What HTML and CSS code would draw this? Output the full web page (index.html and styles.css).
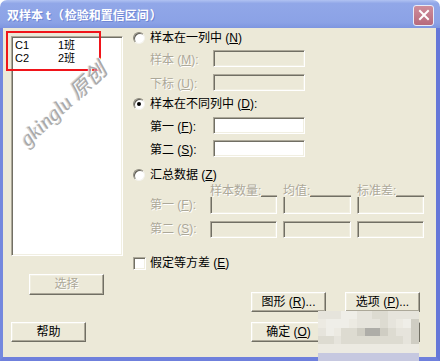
FILE: index.html
```html
<!DOCTYPE html>
<html>
<head>
  <meta charset="utf-8">
  <title>双样本 t</title>
  <link rel="stylesheet" href="styles.css">
</head>
<body>
<div class="window">
  <div class="titlebar">
    <span class="title">双样本 t<span class="paren">（</span>检验和置信区间<span class="paren">）</span></span>
    <span class="close">
      <svg width="12" height="12" viewBox="0 0 12 12"><path d="M2 2 L10 10 M10 2 L2 10" stroke="#fff" stroke-width="2" stroke-linecap="square"/></svg>
    </span>
  </div>
  <div class="frame">
    <div class="left">
      <div class="listbox">
        <div class="list-row"><span class="col">C1</span><span>1班</span></div>
        <div class="list-row"><span class="col">C2</span><span>2班</span></div>
      </div>
      <button class="btn btn-select" disabled>选择</button>
      <button class="btn btn-help">帮助</button>
    </div>

    <div class="right">
      <div class="option first"><span class="radio"></span><span>样本在一列中 (<u>N</u>)</span></div>
      <div class="field gap4 off"><span class="lbl">样本 (<u>M</u>):</span><span class="box"></span></div>
      <div class="field gap7 off"><span class="lbl">下标 (<u>U</u>):</span><span class="box"></span></div>

      <div class="option gap5"><span class="radio on"></span><span>样本在不同列中 (<u>D</u>):</span></div>
      <div class="field gap5"><span class="lbl">第一 (<u>F</u>):</span><span class="box white"></span></div>
      <div class="field gap6"><span class="lbl">第二 (<u>S</u>):</span><span class="box white"></span></div>

      <div class="option gap10"><span class="radio"></span><span>汇总数据 (<u>Z</u>)</span></div>
      <div class="summary off">
        <span></span>
        <div class="head"><span>样本数量:</span><i class="rule"></i></div>
        <div class="head"><span>均值:</span><i class="rule"></i></div>
        <div class="head"><span>标准差:</span><i class="rule"></i></div>
        <span class="lbl">第一 (<u>F</u>):</span>
        <span class="box open"></span>
        <span class="box open"></span>
        <span class="box open"></span>
        <span class="lbl row2">第二 (<u>S</u>):</span>
        <span class="box row2"></span>
        <span class="box row2"></span>
        <span class="box row2"></span>
      </div>

      <div class="option check-row"><span class="check"></span><span>假定等方差 (<u>E</u>)</span></div>

      <div class="buttons gap21">
        <button class="btn">图形 (<u>R</u>)...</button>
        <button class="btn">选项 (<u>P</u>)...</button>
      </div>
      <div class="buttons gap10">
        <button class="btn">确定 (<u>O</u>)</button>
        <button class="btn">取消</button>
      </div>
    </div>
  </div>

  <!-- overlays on the screenshot -->
  <div class="redbox"></div>
  <div class="watermark">gkinglu 原创</div>
  <div class="mosaic">
    <i class="m1"></i><i class="m1"></i><i class="m1"></i><i class="m2"></i><i class="m2"></i><i class="m1"></i><i class="m1"></i><i class="m3"></i><i class="m3"></i><i class="m1"></i><i class="m1"></i><i class="m1"></i><i class="m1"></i>
    <i class="m6"></i><i class="m2"></i><i class="m2"></i><i class="m2"></i><i class="m6"></i><i class="m1"></i><i class="m1"></i><i class="m1"></i><i class="m3"></i><i class="m1"></i><i class="m6"></i><i class="m2"></i><i class="m4"></i>
    <i class="m1"></i><i class="m2"></i><i class="m6"></i><i class="m3"></i><i class="m3"></i><i class="m4"></i><i class="m5"></i><i class="m5"></i><i class="m4"></i><i class="m3"></i><i class="m1"></i><i class="m1"></i><i class="m4"></i>
    <i class="m3"></i><i class="m3"></i><i class="m1"></i><i class="m3"></i><i class="m3"></i><i class="m3"></i><i class="m3"></i><i class="m3"></i><i class="m3"></i><i class="m3"></i><i class="m3"></i><i class="m1"></i><i class="m4"></i>
    <i class="m6"></i><i class="m6"></i><i class="m6"></i><i class="m6"></i><i class="m6"></i><i class="m6"></i><i class="m6"></i><i class="m6"></i><i class="m6"></i><i class="m6"></i><i class="m6"></i><i class="m6"></i><i class="m6"></i>
    <i class="m7"></i><i class="m7"></i><i class="m7"></i><i class="m7"></i><i class="m7"></i><i class="m7"></i><i class="m7"></i><i class="m7"></i><i class="m7"></i><i class="m7"></i><i class="m7"></i><i class="m7"></i><i class="m7"></i>
  </div>
</div>
</body>
</html>
```

FILE: styles.css
```css
body {
  margin: 0;
  background: #fff;
  font-family: "Liberation Sans", "Noto Sans CJK SC", sans-serif;
  font-size: 12px;
  color: #000;
}

u {
  text-decoration: underline;
}

.window {
  position: relative;
  width: 440px;
  height: 361px;
  display: flex;
  flex-direction: column;
}

/* title bar */
.titlebar {
  height: 28px;
  flex: none;
  display: flex;
  align-items: center;
  justify-content: space-between;
  padding: 0 6px 0 7px;
  border-radius: 7px 7px 0 0;
  background: linear-gradient(#b0c2f2 0, #91a7e8 12%, #8ba2e6 80%, #7e96e0 100%);
  box-sizing: border-box;
}
.title {
  font-family: "Noto Sans CJK SC", "DejaVu Sans", sans-serif;
  color: #fff;
  font-weight: bold;
  font-size: 12px;
  white-space: nowrap;
  text-shadow: 1px 1px 0 #6f86d4;
  padding-top: 1px;
}
.paren {
  display: inline-block;
  width: 12px;
  margin: 0 1px;
  text-align: center;
}
.close {
  width: 19px;
  height: 19px;
  margin-top: 2px;
  border: 1px solid #e8ecf8;
  border-radius: 3px;
  background: linear-gradient(#cf8d9b, #b66a7c);
  display: flex;
  align-items: center;
  justify-content: center;
}

/* client frame */
.frame {
  flex: 1;
  display: flex;
  gap: 10px;
  padding: 2px 0 0 8px;
  background: #ece9d8;
  border-left: 3px solid #7488de;
  border-right: 4px solid #6577d8;
  border-bottom: 4px solid #6f80dc;
}

.left {
  width: 112px;
  margin-top: 6px;
  display: flex;
  flex-direction: column;
  align-items: flex-start;
}
.listbox {
  width: 112px;
  height: 220px;
  box-sizing: border-box;
  background: #fff;
  border: 1px solid;
  border-color: #aca899 #fff #fff #aca899;
  box-shadow: inset 1px 1px #716f64, inset -1px -1px #f1efe2;
  padding: 2px 0 0 3px;
}
.list-row {
  display: flex;
  height: 13px;
  font-size: 11px;
  line-height: 13px;
}
.list-row .col {
  width: 43px;
}

.btn {
  height: 21px;
  width: 75px;
  box-sizing: border-box;
  background: #ece9d8;
  border: 1px solid;
  border-color: #fff #716f64 #716f64 #fff;
  box-shadow: inset -1px -1px #aca899, inset 1px 1px #f1efe2;
  font: 12px "Liberation Sans", "Noto Sans CJK SC", sans-serif;
  color: #000;
  padding: 0;
  line-height: 17px;
}
.btn-select {
  margin: 18px 0 0 18px;
  color: #aca899;
  text-shadow: 1px 1px 0 #fff;
}
.btn-help {
  margin-top: 27px;
  height: 20px;
}

/* right column */
.right {
  width: 300px;
  display: flex;
  flex-direction: column;
}
.option {
  height: 16px;
  display: flex;
  align-items: center;
  gap: 5px;
  line-height: 16px;
  white-space: nowrap;
}
.gap4 { margin-top: 4px; }
.gap5 { margin-top: 5px; }
.gap6 { margin-top: 6px; }
.gap7 { margin-top: 7px; }
.gap10 { margin-top: 10px; }
.gap21 { margin-top: 21px; }

.radio {
  width: 12px;
  height: 12px;
  box-sizing: border-box;
  border-radius: 50%;
  background: #fff;
  border: 1px solid;
  border-color: #8e8b7e #f4f3ee #f4f3ee #8e8b7e;
  box-shadow: inset 1px 1px #5f5d55;
  display: flex;
  align-items: center;
  justify-content: center;
}
.radio.on::after {
  content: "";
  width: 4px;
  height: 4px;
  border-radius: 50%;
  background: #000;
}

.check {
  width: 13px;
  height: 13px;
  box-sizing: border-box;
  background: #fff;
  border: 1px solid;
  border-color: #aca899 #fff #fff #aca899;
  box-shadow: inset 1px 1px #716f64, inset -1px -1px #f1efe2;
}
.check-row {
  margin-top: 17px;
  gap: 4px;
}

.field {
  height: 17px;
  display: flex;
  align-items: center;
  padding-left: 17px;
}
.field .lbl {
  width: 63px;
}
.field .box {
  width: 92px;
  height: 17px;
}
.off .lbl,
.off .head span {
  color: #aca899;
  text-shadow: 1px 1px 0 #fff;
}

.box {
  box-sizing: border-box;
  border: 1px solid;
  border-color: #aca899 #fff #fff #aca899;
  box-shadow: inset 1px 1px #716f64, inset -1px -1px #f1efe2;
  background: #ece9d8;
}
.box.white {
  background: #fff;
}
.box.open {
  border-top: 0;
  box-shadow: inset 1px 0 #716f64, inset -1px -1px #f1efe2;
}

/* summary table */
.summary {
  margin-top: 1px;
  padding-left: 17px;
  display: grid;
  grid-template-columns: 54px 67px 68px 67px;
  grid-template-rows: 13px 17px 24px;
  column-gap: 6px;
}
.summary .lbl {
  line-height: 17px;
}
.summary .row2 {
  align-self: end;
  height: 17px;
}
.head {
  display: flex;
  align-items: flex-end;
  line-height: 13px;
}
.head span {
  white-space: nowrap;
  position: relative;
  top: 1px;
}
.rule {
  flex: 1;
  height: 0;
  border-top: 1px solid #aca899;
  border-bottom: 1px solid #716f64;
}

.buttons {
  display: flex;
  gap: 19px;
  margin-left: 118px;
}
.buttons .btn {
  height: 20px;
}

/* overlays */
.redbox {
  position: absolute;
  left: 6px;
  top: 31px;
  width: 95px;
  height: 40px;
  box-sizing: border-box;
  border: 2px solid #f0141a;
}
.watermark {
  position: absolute;
  left: 2px;
  top: 88px;
  width: 120px;
  line-height: 24px;
  text-align: center;
  transform: rotate(-43deg);
  font: italic 21px "Liberation Serif", "Noto Sans CJK SC", serif;
  color: #a8a8a8;
  text-shadow: 1px 1px 0 #fff, -1px -1px 0 #d8d8d8;
  white-space: nowrap;
}
.mosaic {
  position: absolute;
  left: 318px;
  top: 311px;
  width: 101px;
  height: 50px;
  display: grid;
  grid-template-columns: repeat(13, 1fr);
  grid-template-rows: repeat(6, 1fr);
}
.mosaic i { display: block; }
.m1 { background: #e6e4dc; }
.m2 { background: #efeee8; }
.m3 { background: #dddbd1; }
.m4 { background: #cfcdc3; }
.m5 { background: #aeada8; }
.m6 { background: #eceae2; }
.m7 { background: #c6c8e0; }
```
